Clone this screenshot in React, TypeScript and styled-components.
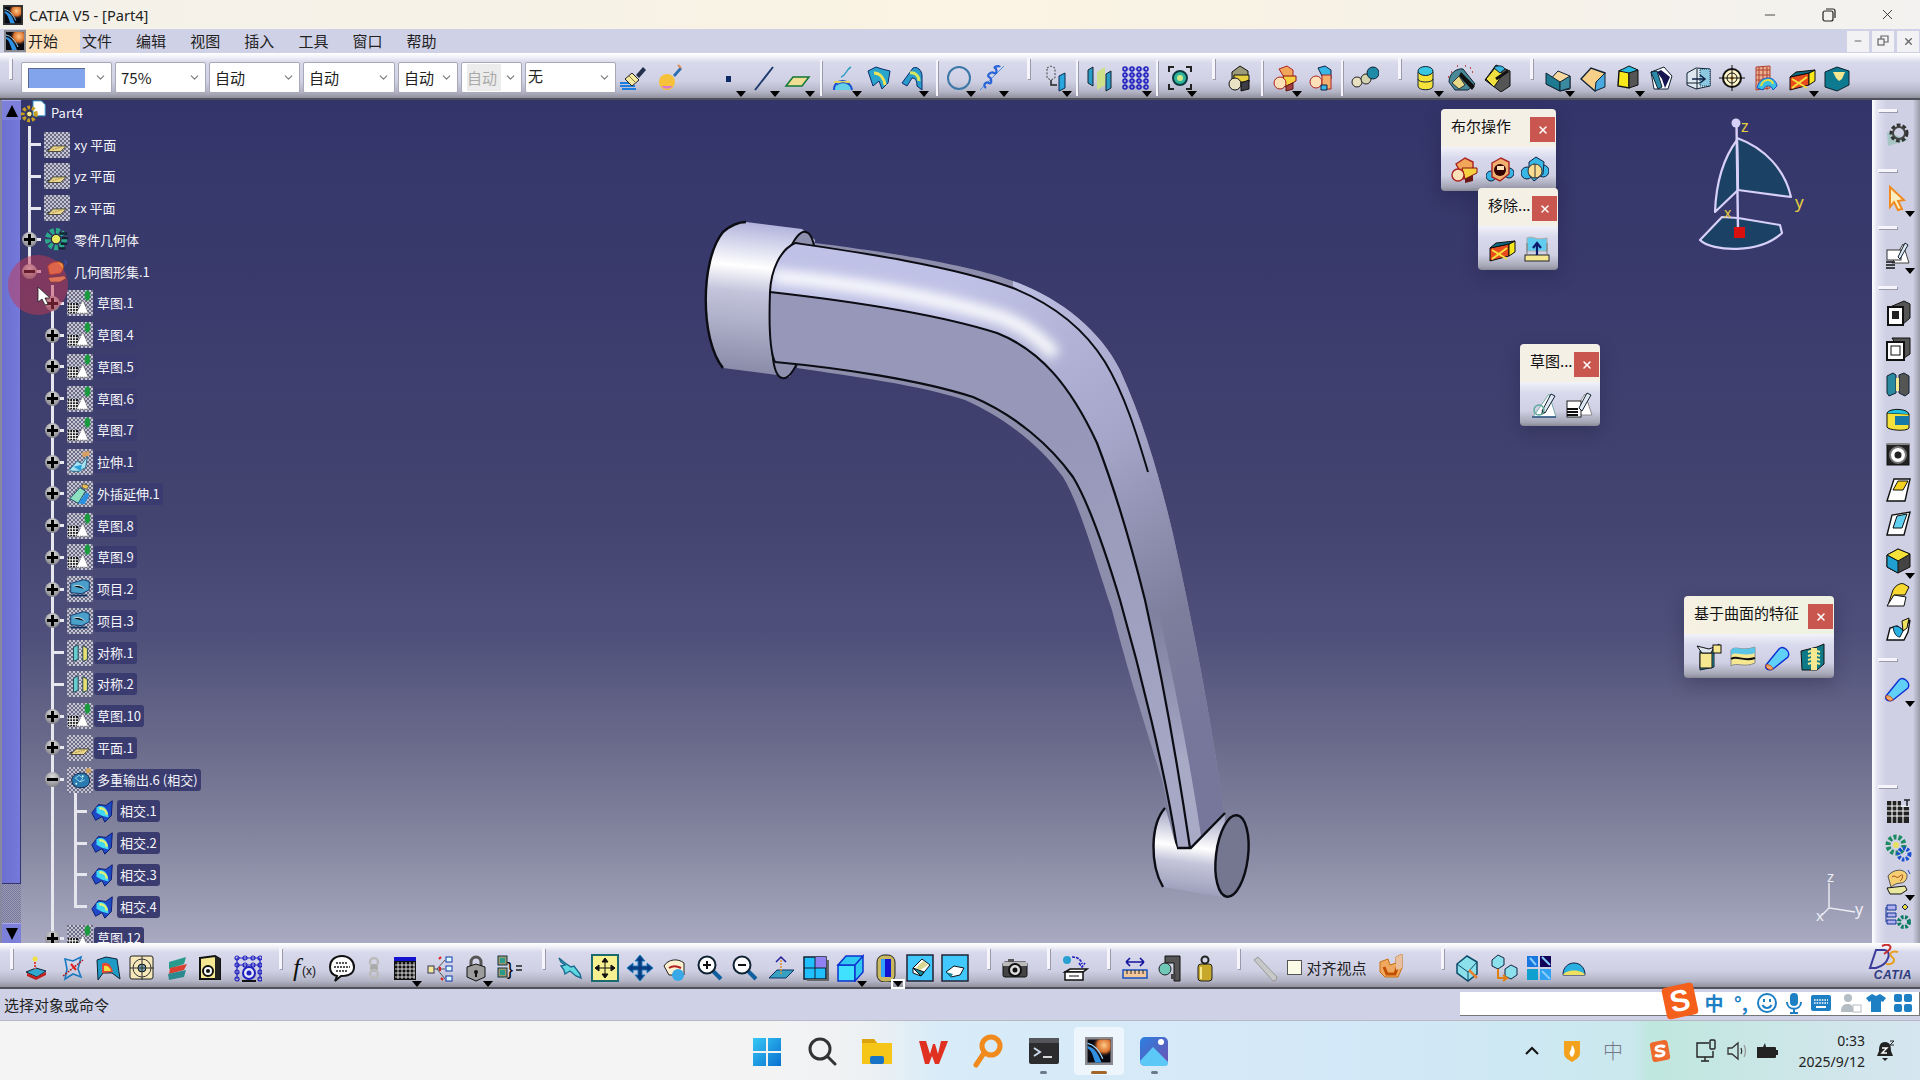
import React from "react";
import styled, { createGlobalStyle } from "styled-components";
import { ChevronDown, Minus, X } from "lucide-react";

const Global = createGlobalStyle`
  html, body { margin: 0; padding: 0; background: #000; }
  * { box-sizing: border-box; }
  body { font-family: "Noto Sans", "Noto Sans CJK SC", sans-serif; }
`;

const ICONS: Record<string, React.ReactNode> = {
  brush: <><path d="M1 19h14M1 22h15M3 25h14" stroke="#1c7fe0" strokeWidth="2"/><path d="M6 15l7-6 7 7-7 6z" fill="#f3e8a2" stroke="#222"/><path d="M10 12l6 6" stroke="#8a7a30"/><path d="M17 11l7-8 3 3-7 8z" fill="#23304d"/></>,
  bulb: <><circle cx="12" cy="18" r="8" fill="#f7c23a"/><path d="M6 22a8 8 0 0 0 12 0z" fill="#d77ad0"/><path d="M18 11l7-8 2 2-7 8z" fill="#2a6db0"/><path d="M23 1l3 3" stroke="#e08850" strokeWidth="2"/></>,
  point: <rect x="11" y="12" width="5" height="6" fill="#0b2a66"/>,
  line: <path d="M6 26L24 3" stroke="#1d3a6e" strokeWidth="2"/>,
  plane: <path d="M2 22l7-9h16l-7 9z" fill="#f0de94" stroke="#173" strokeWidth="1.5"/>,
  wire: <><path d="M10 13c6-2 4-7 10-10" fill="none" stroke="#2a9bc4" strokeWidth="1.4"/><path d="M3 26c0-12 16-12 18 0" fill="#66d0e8" stroke="#1a4fd0" strokeWidth="2"/><path d="M3 18h16" stroke="#e2d060" strokeWidth="2"/><path d="M6 21c4-3 8-3 12 0" stroke="#1a4fd0" fill="none"/></>,
  surf1: <><path d="M3 7l8-4 6 2 8 2-2 12-6 6-3-8-6 5z" fill="#2aa6cc" stroke="#0c2a6e"/><path d="M9 9c6 0 10 5 11 12" stroke="#f0e458" strokeWidth="3" fill="none"/></>,
  surf2: <><path d="M4 19L15 4c4-2 9 2 9 8v14l-5-4c0-6-2-8-5-8l-5 8z" fill="#2a9ccc" stroke="#0c2a6e"/><path d="M12 9c5-1 9 3 9 8" stroke="#d6e860" strokeWidth="3" fill="none"/></>,
  circle: <circle cx="14" cy="14" r="11" fill="none" stroke="#3b78a8" strokeWidth="2"/>,
  helix: <><path d="M2 26L26 2" stroke="#4a90d8"/><path d="M8 24c-4-3 0-7 3-5s3-5 0-6 2-6 5-4 3-4 1-5 4-3 5-1" fill="none" stroke="#2a63d8" strokeWidth="2.2"/></>,
  transform: <><path d="M6 4l4-2 4 2v10l-4 2-4-2z" fill="none" stroke="#444" strokeDasharray="2 1.5"/><path d="M10 16v5h6" stroke="#222" fill="none" strokeWidth="1.5"/><path d="M18 12l6-3v15l-6 3z" fill="#2aa6dc" stroke="#0a2a50"/></>,
  mirror: <><path d="M2 6l5-3v19l-5-3z" fill="#2a9bc4" stroke="#123"/><path d="M11 8l8-5v18l-8 5z" fill="#cfe08a"/><path d="M20 10l5-3v17l-5 3z" fill="#2a9bc4" stroke="#123"/></>,
  dots: <g fill="none" stroke="#2020c0" strokeWidth="1.5">{[4,11,18,25].flatMap(x=>[5,11,17,23].map(y=><circle key={x+"-"+y} cx={x} cy={y} r="2"/>))}<path d="M4 5h21M4 11h21M4 17h21M4 23h21M4 5v18M11 5v18M18 5v18M25 5v18" strokeWidth=".5"/></g>,
  focus: <><circle cx="14" cy="14" r="7" fill="#2fb39b" stroke="#0c3a40" strokeWidth="2"/><circle cx="14" cy="14" r="3" fill="#d4e88a"/><path d="M3 8V3h5M25 8V3h-5M3 20v5h5M25 20v5h-5" stroke="#222" fill="none" strokeWidth="2"/></>,
  asm0: <><path d="M6 8l8-6 8 5v8l-8 5-8-5z" fill="#9c9c7a" stroke="#111"/><path d="M8 11h15v7H8z" fill="#e8d040" stroke="#111"/><circle cx="9" cy="20" r="6" fill="#e9e2c4" stroke="#111"/><path d="M15 19l8-3v9l-8 2z" fill="#3c3c46" stroke="#111"/></>,
  asmR: <><path d="M8 5l8-3 6 4v8l-6 4z" fill="#f2a65a" stroke="#a22"/><path d="M12 12h13v5l-11 6z" fill="#f6d040" stroke="#811"/><circle cx="9" cy="19" r="6" fill="#fbe0b8" stroke="#a22"/><path d="M15 22l7-3v6l-7 2z" fill="#a04040" stroke="#611"/></>,
  asmB: <><path d="M11 4l7-2 6 4v9l-6 3z" fill="#38b6e6" stroke="#124"/><circle cx="9" cy="18" r="6" fill="#fbe0b8" stroke="#a22"/><path d="M15 11h9v14h-9z" fill="#f2b070" stroke="#a22"/><path d="M14 21l6 0v5h-6z" fill="#38b6e6" stroke="#124"/></>,
  spheres: <><circle cx="6" cy="18" r="5" fill="#e8e0c0" stroke="#222"/><circle cx="15" cy="15" r="5" fill="#d4d4b0" stroke="#222"/><circle cx="22" cy="9" r="6" fill="#1e8aa8" stroke="#123"/></>,
  cylY: <><path d="M5 8v14c0 5 15 5 15 0V8z" fill="#f4e23a" stroke="#123"/><path d="M5 15c0 4 15 4 15 0" stroke="#123" fill="none"/><ellipse cx="12.5" cy="7" rx="7.5" ry="4.5" fill="#38c6e0" stroke="#123"/></>,
  sparkle: <><path d="M1 18c0-9 8-14 14-13l12 15-7 6H7z" fill="#4a8a98" stroke="#123"/><path d="M13 8l14 14-3 4L11 12z" fill="#111"/><path d="M4 19l7-7 6 9-6 4z" fill="#e8d888" stroke="#333"/><path d="M3 8h2M9 2h2M17 2h2M0 13h2M24 8h2M22 4h2" stroke="#c0504a" strokeWidth="2" strokeDasharray="1 1"/></>,
  coneK: <><path d="M13 1l14 6v15l-9 6-16-12z" fill="#555" stroke="#111"/><path d="M3 15l9-11 8 6-9 13z" fill="#f2e040" stroke="#111"/><path d="M11 4c2-3 9-3 11 1l-5 4z" fill="#38b6e0" stroke="#123"/><path d="M13 15l12-8" stroke="#111" strokeWidth="3"/></>,
  dome: <><path d="M2 20l12-13 12 5v13l-10 2z" fill="#f6d8a0" stroke="#123"/><path d="M2 20l14 7v-9l-14-9z" fill="#1e7a90" stroke="#123"/><path d="M16 27l10-3V12l-10 6z" fill="#3a8aa0" stroke="#123"/></>,
  wedge: <><path d="M2 15l10-11 14 5-10 18z" fill="#f6d088" stroke="#123" strokeWidth="1.4"/><path d="M16 27l10-4V9l-9 9z" fill="#4aa8e0" stroke="#123"/></>,
  boxY: <><path d="M5 7l10-3v20L4 22z" fill="#f7e81c" stroke="#111" strokeWidth="1.4"/><path d="M15 4l9 2v15l-9 3z" fill="#555" stroke="#111"/><path d="M5 7l10-5 9 4-9 3z" fill="#2abadf" stroke="#111"/></>,
  chamfer: <><path d="M3 8l13-5 8 9-4 13-14 0z" fill="#fff" stroke="#123"/><path d="M3 8l7 17 4-2-5-16z" fill="#2a8ca8" stroke="#123"/><path d="M13 6l9 7-5 11-3-9-5-7z" fill="#141450"/></>,
  split: <><path d="M3 9l9-5 14 1v17l-14 3-9-4z" fill="#dfe8f0" stroke="#123"/><path d="M13 5v20M3 19h20" stroke="#123"/><path d="M16 5h10v17H16z" fill="#8cc8e0" strokeDasharray="1 1" stroke="#135"/><path d="M8 15h12m-4-4l5 4-5 4" stroke="#124" fill="none" strokeWidth="1.5"/></>,
  target: <><circle cx="14" cy="14" r="9" fill="#fff4c8" stroke="#111" strokeWidth="2"/><circle cx="14" cy="14" r="5" fill="none" stroke="#111"/><circle cx="14" cy="14" r="1.8" fill="#e8a020"/><path d="M14 1v26M1 14h26" stroke="#111"/></>,
  rainbow: <><path d="M3 3l14-1v22L3 26z" fill="#e8b090" stroke="#b04030"/><path d="M3 6h14M3 11h14M3 16h14M6 3v23M10 3v23M14 3v23" stroke="#b04030"/><path d="M4 24c2-12 18-14 20-2l-4 4c-2-6-8-5-10 0z" fill="#3ac0e0" stroke="#15c"/><path d="M8 22c2-7 10-8 12-2" stroke="#e8e040" strokeWidth="2" fill="none"/></>,
  boxX: <><path d="M2 13l19-4v12L2 26z" fill="#e84a1c" stroke="#111"/><path d="M4 15l15 9M19 13L4 24" stroke="#f6e040" strokeWidth="2"/><path d="M21 9l6-3v11l-6 4z" fill="#f6e81c" stroke="#111"/><path d="M2 13l6-5 19-2-6 3z" fill="#0e6a80" stroke="#111"/></>,
  boxShield: <><path d="M2 8l12-5 12 4v14l-12 6-12-4z" fill="#0e7a90" stroke="#123"/><path d="M10 8h12l-3 7-3 2-3-3z" fill="#f6e890"/></>,
  extrudeB: <><path d="M3 18l10-4 10 3-9 6z" fill="#30a8d0" stroke="#123"/><path d="M13 23v3l-9-4v-3zM13 26l10-5v-3l-10 5z" fill="#c02020"/><path d="M12 5v10" stroke="#d44" strokeWidth="2" strokeDasharray="2 1"/><circle cx="12" cy="5" r="2.5" fill="#f0e040"/></>,
  surfRed: <><path d="M6 5l8 2 8-4-3 12 3 8-8-3-8 5 2-10z" fill="none" stroke="#1a7ac0" strokeWidth="1.6"/><path d="M4 22L24 6" stroke="#b02020" strokeDasharray="2 1" strokeWidth="1.5"/><path d="M12 10l5 6" stroke="#e02020" strokeWidth="2"/></>,
  surfMesh: <><path d="M4 6l9-3 11 2 3 20-8-6-9 0-5 7z" fill="#1e9ac4" stroke="#123"/><path d="M9 10c4-3 9 0 11 8l-11 1z" fill="#e84830"/><path d="M11 12c3-1 6 1 7 5l-7 0z" fill="#f0e040"/></>,
  radar: <><rect x="2" y="2" width="23" height="23" rx="2" fill="#f6e8b8" stroke="#222"/><circle cx="14" cy="14" r="9" fill="none" stroke="#333"/><circle cx="14" cy="14" r="4" fill="#70a0b0" stroke="#111"/><path d="M14 2v24M2 14h24" stroke="#333"/></>,
  layers: <><path d="M5 8l17-5-2 7-15 5z" fill="#2a9a8c"/><path d="M6 14l17-4-3 6-15 4z" fill="#d84030"/><path d="M4 20l18-4-2 7-15 3z" fill="#2a8a90"/></>,
  formula: <><path d="M2 4l15-2 5 3v20H2z" fill="#f6e890" stroke="#111" strokeWidth="2"/><path d="M17 2v23h5V5z" fill="#222"/><circle cx="10" cy="17" r="5" fill="#fff" stroke="#111" strokeWidth="2"/><circle cx="10" cy="17" r="2" fill="#111"/></>,
  dotsGear: <><g fill="none" stroke="#2020c0" strokeWidth="1.2">{[3,11,19,26].flatMap(x=>[4,11].map(y=><circle key={x+"_"+y} cx={x} cy={y} r="2"/>))}<circle cx="3" cy="18" r="2"/><circle cx="3" cy="25" r="2"/><circle cx="26" cy="18" r="2"/><circle cx="26" cy="25" r="2"/><path d="M3 4h23M3 11h23M3 4v21M26 4v21"/></g><circle cx="15" cy="19" r="6" fill="#e6e6f8" stroke="#2020c0" strokeWidth="2"/><circle cx="15" cy="19" r="2.5" fill="#2020c0"/><path d="M8 27h14" stroke="#111" strokeWidth="2"/></>,
  bubble: <><path d="M14 2C6 2 2 7 2 13c0 5 3 8 7 9l-2 5 6-5c8 0 13-3 13-9S21 2 14 2z" fill="#fff" stroke="#111" strokeWidth="2"/><path d="M8 9h12M6 13h16M8 17h12" stroke="#555" strokeWidth="2" strokeDasharray="2 1"/></>,
  chain: <><circle cx="14" cy="8" r="4" fill="none" stroke="#bbb" strokeWidth="2.5"/><circle cx="14" cy="14" r="4" fill="#aaa"/><circle cx="14" cy="20" r="4" fill="none" stroke="#bbb" strokeWidth="2.5"/></>,
  table: <><rect x="3" y="3" width="22" height="23" fill="#111"/><rect x="3" y="3" width="22" height="4" fill="#1414d0"/><path d="M4 11h20M4 15h20M4 19h20M4 23h20M7 8v17M11 8v17M15 8v17M19 8v17M23 8v17" stroke="#fff" strokeWidth=".8"/></>,
  tree2: <><rect x="1" y="12" width="6" height="7" fill="#f4e89a" stroke="#335"/><g fill="#dff" stroke="#13a"><rect x="19" y="3" width="6" height="5"/><rect x="19" y="12" width="6" height="5"/><rect x="19" y="22" width="6" height="5"/></g><path d="M7 15h11M10 15L18 6M10 15l8 10" stroke="#555"/><path d="M12 5l2-2M13 13v4M14 24l2 2" stroke="#d22" strokeWidth="2"/></>,
  lock: <><path d="M9 12V8a5 5 0 0 1 10 0v4" fill="none" stroke="#555" strokeWidth="3"/><path d="M5 13l9-3 9 3v10l-9 4-9-4z" fill="#9c9c9c" stroke="#111"/><circle cx="14" cy="18" r="2" fill="#111"/><path d="M14 18v5" stroke="#111" strokeWidth="2"/></>,
  params: <><rect x="1" y="2" width="9" height="9" fill="#9c9c70" stroke="#134"/><rect x="3" y="4" width="5" height="5" fill="#2a9a8c"/><rect x="1" y="14" width="9" height="9" fill="#9c9c70" stroke="#134"/><rect x="3" y="16" width="5" height="5" fill="#2a9a8c"/><text x="10" y="21" fontSize="18" fontFamily="Liberation Sans">{"}"}</text><path d="M19 12h6M19 16h6" stroke="#222" strokeWidth="1.5"/></>,
  plane3: <path d="M3 4l6 5 6 4 3-1 6 8 1 4-5-2-6-5-5 3-1-4-3-4 4-1-4-3z" fill="#60d8e0" stroke="#1a6a90" strokeWidth="1.4"/>,
  fit: <><rect x="1" y="1" width="26" height="26" fill="#f6f090" stroke="#1a6a70" strokeWidth="2"/><path d="M14 4v20M4 14h20M14 4l-3 4h6zM14 24l-3-4h6zM4 14l4-3v6zM24 14l-4-3v6z" stroke="#111" fill="#111"/></>,
  pan: <path d="M14 1l5 6h-3v5h5V9l6 5-6 5v-3h-5v5h3l-5 6-5-6h3v-5H7v3l-6-5 6-5v3h5V7H9z" fill="#0a3a80" stroke="#1a80c0"/>,
  rotate: <><path d="M3 12c4-7 14-8 20-3v12H8z" fill="#fdf0d0" stroke="#222"/><path d="M8 14c3-2 8-2 12 0" stroke="#b02020" strokeWidth="2" fill="none"/><circle cx="17" cy="21" r="6" fill="#38a8e8"/></>,
  zoomIn: <><path d="M17 17l8 8" stroke="#1060a0" strokeWidth="4"/><circle cx="11" cy="11" r="8.5" fill="#fff" stroke="#123" strokeWidth="2"/><path d="M11 7v8M7 11h8" stroke="#111" strokeWidth="2"/></>,
  zoomOut: <><path d="M17 17l8 8" stroke="#1060a0" strokeWidth="4"/><circle cx="11" cy="11" r="8.5" fill="#fff" stroke="#123" strokeWidth="2"/><path d="M7 11h8" stroke="#111" strokeWidth="2"/></>,
  normal: <><path d="M2 24l8-8h17l-8 8z" fill="#38a0c0" stroke="#136"/><path d="M14 20V4" stroke="#e09030" strokeWidth="1.5" strokeDasharray="2 1"/><path d="M9 8l5-5 5 5" fill="none" stroke="#2020a0" strokeWidth="1.5"/></>,
  views: <><rect x="3" y="3" width="22" height="22" fill="#20c0ff" stroke="#123" strokeWidth="1.5"/><rect x="14" y="3" width="11" height="11" fill="#9080f0"/><path d="M14 3v22M3 14h22" stroke="#123"/><path d="M6 26h21V6" stroke="#666" fill="none" strokeWidth="2"/></>,
  cube: <><path d="M2 11h17v16H2z" fill="#40e0ff" stroke="#1030d0" strokeWidth="1.5"/><path d="M2 11l8-9h17l-8 9zM19 11l8-9v16l-8 9z" fill="#30c8f0" stroke="#1030d0" strokeWidth="1.5"/></>,
  canY: <><rect x="5" y="1" width="18" height="27" rx="7" fill="#c8b860" stroke="#222"/><rect x="9" y="5" width="10" height="18" fill="#1414d0"/><path d="M9 5h4v18H9z" fill="#30a0ff"/></>,
  shade1: <><rect x="1" y="1" width="26" height="26" fill="#40c8ff" stroke="#223" strokeWidth="1.5"/><path d="M7 14l9-9 8 6-9 11-8-3z" fill="#fff" stroke="#111"/><path d="M10 14l7-7 5 4-8 5z" fill="#d8d890"/><path d="M7 14l8 8 3-4z" fill="#168898" stroke="#111"/></>,
  shade2: <><rect x="1" y="1" width="26" height="26" fill="#40c8ff" stroke="#223" strokeWidth="1.5"/><path d="M5 18l8-6 10 2-4 7-9 2z" fill="#fff" stroke="#111"/><path d="M5 18l5 5 2-3z" fill="#168898"/></>,
  camera: <><rect x="2" y="8" width="24" height="15" rx="2" fill="#444" stroke="#111"/><rect x="2" y="8" width="24" height="4" fill="#bbb"/><rect x="7" y="5" width="6" height="3" fill="#555"/><circle cx="14" cy="16" r="6" fill="#ddd" stroke="#111" strokeWidth="2"/><circle cx="14" cy="16" r="2.5" fill="#111"/></>,
  print: <><circle cx="6" cy="6" r="4" fill="#2aa0d0"/><path d="M11 3c5 0 9 2 10 7m-3-1l3 4 3-4" stroke="#2020c0" strokeWidth="1.6" fill="none" strokeDasharray="3 1"/><path d="M4 18h18l4-3H9z" fill="#fff" stroke="#111" strokeWidth="1.5"/><rect x="4" y="18" width="18" height="8" fill="#fff" stroke="#111" strokeWidth="1.5"/><path d="M8 22h10" stroke="#111"/></>,
  measure: <><path d="M5 8h18M5 8l4-4M5 8l4 4M23 8l-4-4M23 8l-4 4" stroke="#1414a0" strokeWidth="1.7" fill="none"/><rect x="2" y="16" width="24" height="8" fill="#f2c89a" stroke="#1a50c0" strokeWidth="1.5"/><path d="M6 16v4M10 16v4M14 16v4M18 16v4M22 16v4" stroke="#222"/></>,
  caliper: <><path d="M9 2h15v25h-6V9H9z" fill="#555" stroke="#111"/><circle cx="9" cy="15" r="6" fill="#70c8b8" stroke="#222"/><path d="M15 20h5v5h-5z" fill="#444"/></>,
  weight: <><rect x="7" y="10" width="14" height="17" rx="3" fill="#c8a82a" stroke="#222"/><path d="M10 13v12" stroke="#f6e890" strokeWidth="2"/><circle cx="14" cy="6" r="3.5" fill="none" stroke="#222" strokeWidth="2"/></>,
  pencil: <path d="M3 6l4-3 19 20-1 3-3 1z" fill="#c8c8c8" stroke="#999"/>,
  ushape: <><path d="M4 8l8-3 2 6 6-2 0-6 6-3v14l-4 9H9l-5-5z" fill="#f0a860" stroke="#c87010"/><path d="M8 13l3 7h8l3-9" stroke="#c05000" strokeWidth="3" fill="none"/><path d="M20 3l6-3v14l-6 2z" fill="#e8c0a0"/></>,
  cubeArrow: <><path d="M2 10l10-8 10 6v12l-9 7-11-8z" fill="#8ce0ec" stroke="#0c4a68" strokeWidth="1.5"/><path d="M2 10l11 8 9-10M13 18v9" stroke="#0c4a68" fill="none"/><path d="M14 16l8 8" stroke="#e88030" strokeWidth="2.5"/></>,
  blocks: <><path d="M2 6l6-5 6 3v7l-6 4-6-3z" fill="#8ce0ec" stroke="#124"/><path d="M15 15l6-4 6 3v7l-6 4-6-3z" fill="#8ce0ec" stroke="#124"/><path d="M8 15v9h8m-3-3l4 3-4 3" stroke="#e08010" strokeWidth="2" fill="none"/></>,
  quad: <><rect x="2" y="2" width="11" height="11" fill="#1878e0"/><rect x="15" y="2" width="11" height="11" fill="#105"/><rect x="2" y="15" width="11" height="11" fill="#10a0d0"/><rect x="15" y="15" width="11" height="11" fill="#30a0f0"/><path d="M5 4l6 7M17 3l8 8M17 17l8 8" stroke="#8cf" strokeWidth="2"/></>,
  arc: <><path d="M3 21c0-16 22-16 22 0z" fill="#2ab0e0" stroke="#124"/><path d="M3 21c3-6 19-6 22 0z" fill="#f0e060"/></>,
  bool1: <><path d="M5 8l9-6 8 4v10l-9 7z" fill="#f2a65a" stroke="#a22" strokeWidth="1.4"/><path d="M11 12h15v5l-12 6z" fill="#f6d040" stroke="#811"/><circle cx="7" cy="19" r="6" fill="#fbe0b8" stroke="#a22" strokeWidth="1.4"/><path d="M14 23l8-4v6l-8 2z" fill="#6a1818"/></>,
  bool2: <><circle cx="5" cy="20" r="5" fill="#38b6e6" stroke="#124"/><circle cx="23" cy="17" r="5" fill="#38b6e6" stroke="#124"/><path d="M6 7l9-5 8 4v12l-9 7-8-4z" fill="#f2b070" stroke="#a22" strokeWidth="1.4"/><circle cx="14" cy="14" r="6" fill="#300"/><path d="M11 10h7v4h-7z" fill="#fbe0b8"/></>,
  bool3: <><circle cx="6" cy="17" r="6" fill="#38b6e6" stroke="#124"/><circle cx="22" cy="15" r="6" fill="#38b6e6" stroke="#124"/><path d="M8 6l7-5 8 5-1 12-9 7-5-6z" fill="#38b6e6" stroke="#124"/><circle cx="14" cy="15" r="7" fill="#fbdc90" stroke="#333"/><path d="M14 8v14" stroke="#333"/></>,
  removeSurf: <><path d="M4 3c6-3 8 3 20 0v13l-20 0z" fill="#60ccf0" stroke="#aaa"/><rect x="2" y="20" width="24" height="6" fill="#f6e890" stroke="#222"/><path d="M14 20V9m-4 4l4-5 4 5" stroke="#0c1a6e" strokeWidth="2.2" fill="none"/><path d="M4 8v13M24 8v13" stroke="#777"/></>,
  sketchA: <><path d="M3 26h23L19 3z" fill="#fff" stroke="#7aa"/><path d="M12 20l9-17 4 2-10 17z" fill="#dfe8f0" stroke="#123"/><path d="M12 20l3 2-4 2z" fill="#111"/><circle cx="9" cy="19" r="5" fill="none" stroke="#5aa89a" strokeWidth="1.4"/><path d="M2 26h24" stroke="#2a5080" strokeWidth="1.6"/></>,
  sketchB: <><path d="M6 24h21L20 3z" fill="#fff" stroke="#888"/><rect x="2" y="10" width="14" height="16" fill="#fff" stroke="#222"/><path d="M2 18h11M2 21h11M2 24h11" stroke="#111" strokeWidth="1.8"/><path d="M14 17l8-15 4 2-9 16z" fill="#dfe8f0" stroke="#123"/></>,
  padSurf: <><path d="M6 8l12-2 7-5v6l-5 3v14l-14 3z" fill="#2a9aa8" stroke="#123"/><path d="M6 10h12v15H6z" fill="#f6e890" stroke="#111"/><path d="M3 3l12 3 5-2-3 6H8z" fill="#dfe8f0" stroke="#111"/><rect x="19" y="2" width="8" height="8" fill="#f6e890" stroke="#111"/></>,
  thick: <><path d="M2 7c5-5 10 2 24-3v16c-10 5-19-1-24 3z" fill="#f6e890" stroke="#888"/><path d="M2 16c6-4 12 3 24-1" stroke="#111" strokeWidth="2" fill="none"/><path d="M2 7c5-5 10 2 24-3v6C15 14 8 8 2 12z" fill="#5cc6e8"/></>,
  capsule: <><path d="M2 22L15 6c4-4 12 2 9 8L9 26c-3 2-9 0-7-4z" fill="#60d0f8" stroke="#1030d0" strokeWidth="1.4"/><path d="M2 22c-1 3 4 6 7 4-1-3-4-5-7-4z" fill="#f4a868" stroke="#c05020"/></>,
  sew: <><path d="M2 8l16-4 7-3v20l-7 6H3z" fill="#0e7a88" stroke="#111"/><path d="M12 5h6v22h-6z" fill="#f6e890"/><path d="M12 8l-3 1M12 12l-3 1M12 16l-3 1M12 20l-3 1M18 8l3 1M18 12l3 1M18 16l3 1M18 20l3 1" stroke="#f6e890" strokeWidth="2"/></>,
  gear: <><path d="M3 13l22 8-21 6z" fill="#8cc0b0" opacity=".6"/><circle cx="15" cy="14" r="7.5" fill="none" stroke="#333" strokeWidth="4" strokeDasharray="3.5 2"/><circle cx="15" cy="14" r="6" fill="none" stroke="#444" strokeWidth="2"/></>,
  cursor: <path d="M6 3l14 13-6 1 4 8-4 1-4-8-4 5z" fill="#fdf0c0" stroke="#f08a20" strokeWidth="2"/>,
  sketchC: <><path d="M8 22h17L19 3z" fill="#fff" stroke="#444"/><rect x="3" y="9" width="14" height="10" fill="#fff" stroke="#333"/><path d="M2 21h9M2 24h9M2 27h9" stroke="#111" strokeWidth="1.5"/><path d="M14 16l7-14 3 2-8 14z" fill="#dfe8f0" stroke="#123"/></>,
  pad1: <><path d="M6 8l14-6 6 3v14l-8 7H6z" fill="#555" stroke="#111"/><path d="M4 8h15v18H4z" fill="#fff" stroke="#111" strokeWidth="2"/><path d="M8 12h7v8H8z" fill="#222"/></>,
  pad2: <><path d="M8 3h18v16l-6 4z" fill="#555" stroke="#111"/><rect x="3" y="7" width="17" height="18" fill="#fff" stroke="#111" strokeWidth="2"/><rect x="7" y="11" width="9" height="9" fill="#fff" stroke="#111"/></>,
  shaft: <><path d="M3 6l6-3 3 2v18l-7 3-2-3z" fill="#2a8aa0" stroke="#123"/><path d="M15 5l5-2 5 3v17l-4 3-6-3z" fill="#555" stroke="#123"/><path d="M12 8h3v13h-3z" fill="#f6e890"/></>,
  cylH: <><path d="M3 8v14c0 3 20 5 22 1V9z" fill="#f4e23a" stroke="#111"/><path d="M3 8c2-5 20-5 22 1" fill="#20c0e0" stroke="#111"/><rect x="11" y="11" width="14" height="9" fill="#1878a8"/></>,
  holeB: <><rect x="3" y="4" width="22" height="21" fill="#222" stroke="#111"/><path d="M3 4h22" stroke="#888" strokeWidth="2"/><circle cx="14" cy="15" r="8" fill="#fff" stroke="#777" strokeWidth="2"/><circle cx="14" cy="15" r="3.5" fill="#222"/></>,
  rib: <><path d="M3 26l7-22h16l-5 22z" fill="#fff" stroke="#111" strokeWidth="1.4"/><path d="M9 15l5-9h10l-5 9z" fill="#f4d020" stroke="#111"/></>,
  slot: <><path d="M3 25l5-20 18-3-6 23z" fill="#fff" stroke="#111" strokeWidth="1.4"/><path d="M9 18l4-12 10-2-5 14z" fill="#60d0f0" stroke="#111"/></>,
  stiff: <><path d="M3 9l11-6 12 5v13l-12 6-11-6z" fill="#444" stroke="#111"/><path d="M3 9l11 6 12-7-12-5z" fill="#f4e23a" stroke="#111"/><path d="M14 15v12l-11-6V9z" fill="#20a0d0" stroke="#111"/></>,
  loft: <><path d="M4 25l4-12c1-6 8-11 12-9l5 3-4 8H10z" fill="#f6d830" stroke="#111"/><path d="M3 26h17l2-9-12-2z" fill="#fff" stroke="#111"/></>,
  rloft: <><path d="M3 25l3-12 7-2 6 4 7-10-2 12-4 8z" fill="#fff" stroke="#111" strokeWidth="1.4"/><path d="M9 12c3-2 8 0 10 4l-3 6c-4 0-6-4-7-10z" fill="#28b0e0" stroke="#123"/><path d="M18 6l7-3-2 10-4 3z" fill="#f0e060" stroke="#111"/></>,
  gridT: <><path d="M3 3h14v6h8v16H3z" fill="#222"/><path d="M3 8h22M3 13h22M3 18h22M8 3v22M13 3v22M19 9v16" stroke="#fff" strokeWidth="1.1"/><path d="M20 2h6M23 2v6" stroke="#222" strokeWidth="1.5"/></>,
  gears: <><circle cx="12" cy="11" r="8" fill="none" stroke="#1e8a60" strokeWidth="5" strokeDasharray="3 2"/><circle cx="12" cy="11" r="3" fill="#e8e060"/><circle cx="20" cy="20" r="5.5" fill="none" stroke="#1a50d0" strokeWidth="4" strokeDasharray="2.5 1.5"/></>,
  geoT: <><path d="M4 8c4-6 14-8 18-3 3 4-1 10-5 10-4 0-8 2-10 4z" fill="#f6d070" stroke="#555"/><path d="M8 9c4-3 4 3 8-1s3 3 0 5" stroke="#a04020" fill="none"/><path d="M3 20l18-2 2 4-6 4H6z" fill="#e8e8a0" stroke="#111"/><path d="M24 2l2 4" stroke="#2040d0"/></>,
  treeGear: <><path d="M3 3h9v5H3zM3 11h9v4H3zM3 18h9v4H3z" fill="#b0b0f0" stroke="#103090"/><path d="M2 5v15" stroke="#103090"/><circle cx="20" cy="20" r="5" fill="none" stroke="#0a7a60" strokeWidth="4" strokeDasharray="2.5 1.5"/><path d="M18 5l3-3 3 3-3 3z" fill="#e8d840" stroke="#124"/></>,
  root: <><path d="M13 1h9l4 4v12H13z" fill="#fff" stroke="#3aa0d0"/><circle cx="9" cy="15" r="7" fill="none" stroke="#c8a020" strokeWidth="4" strokeDasharray="3 2"/><circle cx="9" cy="15" r="3" fill="#f6e890" stroke="#333"/></>,
  body: <><circle cx="13" cy="13" r="9" fill="none" stroke="#2aaa8a" strokeWidth="6" strokeDasharray="4 2"/><circle cx="13" cy="13" r="5" fill="#e8e860" stroke="#123"/><path d="M17 7h8M19 12h7M18 18h7M16 23h7" stroke="#123" strokeWidth="2.5"/></>,
  geoset: <><path d="M4 8c3-5 12-7 16-3 3 4-1 11-5 11s-6 1-9 1z" fill="#f49040" stroke="#a04010"/><path d="M4 20l18-2 2 3-7 4H7z" fill="#f6b060" stroke="#333"/><path d="M22 2c3 0 2 3 0 5" stroke="#4060e0" fill="none"/></>,
  planeT: <><path d="M3 19h6" stroke="#222"/><path d="M4 21l6-6h14l-6 6z" fill="#e8d48a" stroke="#443"/><path d="M9 19l10-3" stroke="#a89040" strokeDasharray="2 1"/></>,
  sketchT: <><rect x="1" y="14" width="11" height="11" fill="#111"/><path d="M3 14v11M6 14v11M9 14v11M1 17h11M1 20h11M1 23h11" stroke="#fff"/><path d="M10 25h13l-6-14z" fill="#fff" stroke="#555" strokeDasharray="1 1"/><ellipse cx="22" cy="6" rx="3" ry="5.5" fill="#1b9a40"/></>,
  extrudeT: <><path d="M3 22l8-9 5 3 6-8-2 12-7 4-8 0z" fill="#a8e0f0" stroke="#268"/><path d="M7 19l8 5 1-7z" fill="#2aa0d8"/><path d="M16 4l8-2v5l-7 2z" fill="#d8a060"/></>,
  extrapT: <><path d="M3 19l11-12 6 4-8 13z" fill="#8ce0c0" stroke="#146"/><path d="M12 24l9-12 3 3-5 10z" fill="#2a90e0"/><path d="M17 3l7 2-3 4-5-2z" fill="#e8c050" stroke="#555"/></>,
  projT: <><path d="M4 8l14-4 6 2v9l-8 4-12-1z" fill="#4aa0c8" stroke="#136"/><path d="M4 21h18" stroke="#103060" strokeWidth="2"/><path d="M7 11c5-2 9 0 12 3" stroke="#eee"/></>,
  symT: <><path d="M14 2v24" stroke="#fff" strokeDasharray="2 1"/><path d="M7 8l5-3v16l-5 2z" fill="#6cc" stroke="#245"/><path d="M17 6l5 3v12l-5 2z" fill="#e8e070" stroke="#245"/></>,
  multiT: <><path d="M5 13c2-7 15-9 18-3 3 5 1 11-5 12-6 1-13 0-13-9z" fill="#2a7ab0" stroke="#124"/><path d="M9 12l4-3 4 3-3 4zM14 16l5-2" stroke="#9de" fill="none"/><circle cx="10" cy="18" r="1" fill="#dfe"/><circle cx="17" cy="10" r="1" fill="#dfe"/><circle cx="23" cy="4" r="3" fill="#c8a060"/></>,
  interT: <><path d="M2 16l7-9 8 1 7-5-1 16-7 7-3-6-7 4z" fill="#1e4ac8" stroke="#0a1a6e"/><path d="M7 10c7-4 12 1 13 11l-7-2-6-3z" fill="#40d8f0"/><path d="M10 11c5 0 8 3 8 7" stroke="#e0f070" strokeWidth="2.5" fill="none"/></>,
  fx: <><text x="0" y="22" fontSize="26" fontStyle="italic" fontFamily="Liberation Serif" fill="#111">f</text><text x="9" y="21" fontSize="12" fontFamily="Liberation Sans" fill="#111">(x)</text></>,
};

const Root = styled.div`
  width: 1920px;
  height: 1080px;
  display: flex;
  flex-direction: column;
  overflow: hidden;
  font-family: "Noto Sans", "Noto Sans CJK SC", sans-serif;
`;

const TitleBar = styled.div`
  height: 29px;
  flex: none;
  display: flex;
  align-items: center;
  padding-left: 3px;
  background: linear-gradient(90deg, #f4f1ea 0, #f6f2e6 30%, #fbf3e3 50%, #f7f2e6 70%, #f3f2f0 100%);
  font-size: 14.6px;
  color: #222;
`;

const TitleText = styled.span`
  margin-left: 6px;
`;

const WinButtons = styled.div`
  margin-left: auto;
  display: flex;
  padding-right: 3px;
  color: #222;
`;

const WinButton = styled.div`
  width: 59px;
  height: 29px;
  display: flex;
  align-items: center;
  justify-content: center;
`;

const MenuBar = styled.div`
  height: 24px;
  flex: none;
  display: flex;
  align-items: center;
  background: #cfd1e6;
  font-family: "Noto Sans CJK SC", sans-serif;
  font-size: 15px;
  color: #222;
  padding-left: 4px;
`;

const StartItem = styled.div`
  width: 54px;
  height: 24px;
  margin-right: 2px;
  padding-left: 2px;
  line-height: 24px;
  background: #fde3c0;
`;

const MenuItem = styled.div`
  width: 54.1px;
  line-height: 24px;
`;

const DocButtons = styled.div`
  margin-left: auto;
  display: flex;
  gap: 3px;
  padding-right: 1px;
`;

const DocButton = styled.div`
  width: 22px;
  height: 21px;
  background: #f2f2f5;
  color: #666;
  display: flex;
  align-items: center;
  justify-content: center;
`;

const Bar = styled.div<{ $h: number }>`
  height: ${(p) => p.$h}px;
  flex: none;
  display: flex;
  align-items: flex-start;
  padding-top: 11px;
  background: linear-gradient(180deg, #fff 0, #f4f4fa 7%, #d8d9eb 20%, #cfd0e4 60%, #b4b5c6 82%, #8f8f9c 96%, #50505a 96%, #50505a 100%);
`;

const ComboRow = styled.div`
  display: flex;
  gap: 3px;
  margin-left: 9px;
  margin-top: -2px;
`;

const ComboBox = styled.div<{ $w: number; $off?: boolean }>`
  width: ${(p) => p.$w}px;
  height: 31px;
  background: #fff;
  border: 1px solid #a8a8b8;
  border-radius: 2px;
  display: flex;
  align-items: center;
  padding: 0 4px 0 5px;
  font-family: "Noto Sans CJK SC", sans-serif;
  font-size: 15px;
  color: ${(p) => (p.$off ? "#aaa" : "#222")};
  svg { margin-left: auto; color: #777; flex: none; }
`;

const Swatch = styled.div`
  width: 57px;
  height: 20px;
  margin-left: 1px;
  background: #82a4ec;
  border-top: 1px solid #5a6a90;
  border-left: 1px solid #5a6a90;
`;

const OffText = styled.span`
  background: #ececec;
  height: 27px;
  line-height: 27px;
  padding-right: 4px;
`;

const NoneText = styled.span`
  margin: -5px 0 0 -3px;
`;

const ToolSlot = styled.div<{ $gap: number; $col?: boolean }>`
  width: 28px;
  height: 28px;
  flex: none;
  position: relative;
  ${(p) => (p.$col ? `margin-top: ${p.$gap}px;` : `margin-left: ${p.$gap}px;`)}
  svg { display: block; }
`;

const DropArrow = styled.i<{ $boxed?: boolean }>`
  position: absolute;
  left: 21px;
  top: 27px;
  width: 0;
  height: 0;
  border-left: 5px solid transparent;
  border-right: 5px solid transparent;
  border-top: 6px solid #000;
  ${(p) => (p.$boxed ? "outline: 2px solid #fff;" : "")}
`;

const Grip = styled.div<{ $gap: number; $col?: boolean; $tall?: boolean }>`
  flex: none;
  background: #f5f5fb;
  box-shadow: 1px 1px 0 #9a9aaa;
  ${(p) =>
    p.$col
      ? `width: 19px; height: 3px; margin-top: ${p.$gap}px; margin-left: -6px;`
      : `width: ${p.$tall ? 2 : 3}px; height: ${p.$tall ? 36 : 21}px; margin-left: ${p.$gap}px; margin-top: ${p.$tall ? -4 : -6}px;`}
`;

const Viewport = styled.div`
  flex: 1;
  display: flex;
  min-height: 0;
`;

const Canvas = styled.div`
  flex: 1;
  position: relative;
  display: flex;
  overflow: hidden;
  background: linear-gradient(180deg, #33346a 0, #43446f 50%, #4e4f7a 63%, #676889 75%, #85869f 88%, #a9aac2 100%);
`;

const ScrollBar = styled.div`
  width: 21px;
  flex: none;
  display: flex;
  flex-direction: column;
  border-left: 2px solid #8888a0;
`;

const ScrollBtn = styled.div<{ $down?: boolean }>`
  height: 20px;
  flex: none;
  background: #7c80d8;
  display: flex;
  align-items: center;
  justify-content: center;
  border-top: 1px solid #a8a8ee;
  &::after {
    content: "";
    border-left: 6px solid transparent;
    border-right: 6px solid transparent;
    ${(p) => (p.$down ? "border-top: 12px solid #000;" : "border-bottom: 12px solid #000;")}
  }
`;

const ScrollThumb = styled.div`
  height: 764px;
  flex: none;
  background: linear-gradient(90deg, #6a6fd0, #7479da);
  border-right: 1px solid #34346e;
  border-bottom: 1px solid #34346e;
`;

const ScrollTrack = styled.div`
  flex: 1;
  background: repeating-conic-gradient(#9a9ab0 0 25%, #7878a0 0 50%) 0 0 / 2px 2px;
`;

const Tree = styled.div`
  margin: -3px 0 0 -3px;
  display: flex;
  flex-direction: column;
  color: #f4f4fa;
  font-family: "Noto Sans CJK SC", "Noto Sans", sans-serif;
  font-size: 13px;
`;

const Row = styled.div`
  height: 31.75px;
  flex: none;
  display: flex;
  align-items: center;
`;

const Guide = styled.span<{ $v: "none" | "full" | "up"; $h?: boolean }>`
  width: 23px;
  height: 100%;
  flex: none;
  position: relative;
  &::before {
    content: "";
    display: ${(p) => (p.$v === "none" ? "none" : "block")};
    position: absolute;
    left: 10px;
    top: 0;
    width: 3px;
    height: ${(p) => (p.$v === "up" ? "50%" : "100%")};
    background: #e6e6ee;
  }
  &::after {
    content: "";
    display: ${(p) => (p.$h ? "block" : "none")};
    position: absolute;
    left: 10px;
    right: 0;
    top: calc(50% - 1.5px);
    height: 3px;
    background: #e6e6ee;
  }
`;

const Expander = styled.b`
  position: absolute;
  z-index: 1;
  left: 4px;
  top: calc(50% - 7.5px);
  width: 15px;
  height: 15px;
  border-radius: 50%;
  background: radial-gradient(circle at 50% 30%, #dcdcdc, #707078);
  display: flex;
  align-items: center;
  justify-content: center;
  svg { display: block; }
`;

const TreeIcon = styled.span<{ $dither?: boolean; $tail?: boolean }>`
  width: 26px;
  height: 26px;
  flex: none;
  margin-left: 3px;
  position: relative;
  ${(p) => (p.$dither ? "background: repeating-conic-gradient(#c4c4d2 0 25%, #6c6c86 0 50%) 0 0 / 4px 4px;" : "")}
  svg { display: block; overflow: visible; }
  ${(p) =>
    p.$tail
      ? `&::after { content: ""; position: absolute; left: 7px; top: 100%; width: 3px; height: 3px; background: #e6e6ee; }`
      : ""}
`;

const Label = styled.span<{ $box?: boolean }>`
  margin-left: 1px;
  padding: 0 3px;
  height: 22px;
  line-height: 21px;
  border-radius: 3px;
  white-space: nowrap;
  ${(p) => (p.$box ? "background: #3a3b6f;" : "")}
`;

const Spot = styled.div`
  position: absolute;
  left: 8px;
  top: 155px;
  width: 60px;
  height: 60px;
  border-radius: 50%;
  background: rgba(196, 56, 84, 0.5);
  z-index: 3;
`;

const Pointer = styled.svg`
  position: absolute;
  left: 37px;
  top: 186px;
  z-index: 4;
`;

const Stage = styled.svg`
  position: absolute;
  left: 0;
  top: 0;
  pointer-events: none;
  font-family: "Noto Sans", sans-serif;
`;

const Float = styled.div<{ $x: number; $y: number; $w: number }>`
  position: absolute;
  left: ${(p) => p.$x}px;
  top: ${(p) => p.$y - 100}px;
  width: ${(p) => p.$w}px;
  height: 82px;
  border-radius: 4px;
  overflow: hidden;
  box-shadow: 0 6px 18px rgba(20, 20, 50, 0.28);
  z-index: 2;
`;

const FloatHead = styled.div<{ $tint?: boolean }>`
  height: 38px;
  display: flex;
  align-items: flex-start;
  padding: 8px 1px 0 10px;
  font-family: "Noto Sans CJK SC", sans-serif;
  font-size: 15px;
  line-height: 18px;
  color: #111;
  background: ${(p) => (p.$tint ? "linear-gradient(90deg,#f6f1e2,#eef2e2)" : "#f5f0e6")};
  white-space: nowrap;
`;

const CloseBtn = styled.div`
  width: 25px;
  height: 25px;
  margin-left: auto;
  flex: none;
  background: #c9574f;
  color: #fff;
  display: flex;
  align-items: center;
  justify-content: center;
`;

const FloatBody = styled.div`
  height: 44px;
  display: flex;
  gap: 7px;
  padding: 9px 0 0 10px;
  background: linear-gradient(180deg, #f2f2fa 0, #d8d9ec 25%, #cfd0e4 65%, #a4a5b4 92%, #8a8a96 100%);
  svg { display: block; flex: none; }
`;

const RightBar = styled.div`
  width: 48px;
  flex: none;
  display: flex;
  flex-direction: column;
  padding-left: 12px;
  background: linear-gradient(90deg, #fff 0, #e0e0f0 12%, #cfd0e4 30%, #cfd0e4 85%, #9a9aa8 100%);
`;

const BottomWrap = styled.div`
  position: relative;
`;

const CheckBox = styled.span<{ $gap: number }>`
  width: 15px;
  height: 15px;
  flex: none;
  margin: 6px 0 0 ${(p) => p.$gap}px;
  background: #fbfbe8;
  border: 1px solid #555;
`;

const CheckLabel = styled.span`
  margin: 4px 0 0 4px;
  font-family: "Noto Sans CJK SC", sans-serif;
  font-size: 15px;
  line-height: 20px;
  color: #222;
  white-space: nowrap;
`;

const Brand = styled.div`
  position: absolute;
  right: 8px;
  top: 1px;
  width: 52px;
  height: 38px;
`;

const BrandName = styled.span`
  position: absolute;
  right: 0;
  bottom: 0;
  font: italic bold 12px "Liberation Sans", sans-serif;
  letter-spacing: 0.5px;
  color: #2d3a7e;
`;

const StatusBar = styled.div`
  height: 32px;
  flex: none;
  display: flex;
  align-items: center;
  background: #cfd1e6;
  border-bottom: 1px solid #b8b8c4;
  padding-left: 4px;
  font-family: "Noto Sans CJK SC", sans-serif;
  font-size: 15px;
  color: #222;
  position: relative;
`;

const ImeBox = styled.div`
  margin-left: auto;
  width: 460px;
  height: 24px;
  margin-top: -2px;
  background: #fff;
  border-bottom: 1px solid #777;
  border-right: 1px solid #777;
  display: flex;
  align-items: center;
  position: relative;
`;

const SogouBadge = styled.div`
  position: absolute;
  left: 204px;
  top: -7px;
  width: 32px;
  height: 32px;
  background: #f4601c;
  border-radius: 4px;
  transform: rotate(-12deg);
  color: #fff;
  font: bold 30px/31px "Liberation Sans", sans-serif;
  text-align: center;
`;

const ImeIcons = styled.div`
  margin-left: 243px;
  display: flex;
  align-items: center;
  svg { display: block; flex: none; }
`;

const ImeItem = styled.span<{ $gap: number }>`
  width: 22px;
  height: 22px;
  flex: none;
  margin-left: ${(p) => p.$gap}px;
  color: #1d7fc4;
  font: bold 19px/22px "Noto Sans CJK SC", sans-serif;
  text-align: center;
`;

const Taskbar = styled.div`
  height: 59px;
  flex: none;
  display: flex;
  align-items: center;
  padding-left: 739px;
  position: relative;
  background: linear-gradient(90deg, #f4f4f4 0, #f3f3f4 40%, #eef1f3 45%, #d8ebf8 49%, #d3e8f8 70%, #cae8ee 85%, #bfe7de 86%, #cfe6ea 95%, #d6e5f0 100%);
`;

const TaskSlot = styled.div<{ $active?: boolean }>`
  width: 55.4px;
  height: 48px;
  flex: none;
  position: relative;
  display: flex;
  align-items: center;
  justify-content: center;
  margin-top: 1px;
  svg { display: block; }
  ${(p) =>
    p.$active
      ? `&::before { content: ""; position: absolute; left: 3px; right: 3px; top: 0; bottom: 0; background: rgba(255,255,255,.55); border-radius: 4px; }`
      : ""}
  > svg { position: relative; }
`;

const RunDot = styled.i<{ $on?: boolean }>`
  position: absolute;
  left: 50%;
  bottom: 1px;
  width: ${(p) => (p.$on ? 16 : 7)}px;
  margin-left: ${(p) => (p.$on ? -8 : -3.5)}px;
  height: 3px;
  border-radius: 2px;
  background: ${(p) => (p.$on ? "#a0662a" : "#6a7a8a")};
`;

const Tray = styled.div`
  margin-left: 337.8px;
  display: flex;
  align-items: center;
  svg { display: block; }
`;

const TraySlot = styled.div<{ $gap: number }>`
  width: 24px;
  height: 24px;
  flex: none;
  margin-left: ${(p) => p.$gap}px;
`;

const TrayZh = styled.span`
  font: 300 20px/24px "Noto Sans CJK SC", sans-serif;
  color: #778;
  display: block;
  text-align: center;
`;

const Clock = styled.div`
  width: 86px;
  text-align: right;
  font-size: 14px;
  line-height: 21px;
  color: #222;
`;

type Item = [string, number, (1 | 2)?];

function Ico({ n, s = 28 }: { n: string; s?: number }) {
  return (
    <svg width={s} height={s} viewBox="0 0 28 28">
      {ICONS[n]}
    </svg>
  );
}

function Strip({ items, start, col }: { items: Item[]; start: number; col?: boolean }) {
  let end = start;
  return (
    <>
      {items.map(([n, c, a], i) => {
        if (n === "|" || n === "!") {
          const size = col ? 3 : n === "!" ? 2 : 3;
          const gap = c - size / 2 - end;
          end = c + size / 2;
          return <Grip key={i} $gap={gap} $col={col} $tall={n === "!"} />;
        }
        const gap = c - 14 - end;
        end = c + 14;
        return (
          <ToolSlot key={i} $gap={gap} $col={col}>
            <Ico n={n} />
            {a ? <DropArrow $boxed={a === 2} /> : null}
          </ToolSlot>
        );
      })}
    </>
  );
}

function CatiaLogo({ s, frame }: { s: number; frame?: boolean }) {
  return (
    <svg width={s} height={s} viewBox="0 0 22 22">
      <defs>
        <radialGradient id="catiaGlow" cx=".72" cy=".25" r=".5">
          <stop offset="0" stopColor="#ffc98a" />
          <stop offset=".6" stopColor="#d9702a" />
          <stop offset="1" stopColor="#1a1420" stopOpacity="0" />
        </radialGradient>
      </defs>
      <rect width="22" height="22" fill={frame ? "#8a8a90" : "#333"} />
      <rect x="2" y="2" width="18" height="18" fill="#0a0a12" />
      <rect x="2" y="2" width="18" height="18" fill="url(#catiaGlow)" />
      <path d="M2 7c5 1 8 5 11 13H8C6 14 5 10 2 9z" fill="#2f8fe0" />
      <path d="M2 5c5 1 9 5 12 12" stroke="#9fdcff" fill="none" />
    </svg>
  );
}

const TOP: Item[] = [
  ["brush", 633], ["bulb", 669], ["point", 729, 1], ["line", 762.5, 1], ["plane", 798, 1], ["!", 821],
  ["wire", 845, 1], ["surf1", 879], ["surf2", 912, 1], ["!", 937], ["circle", 959, 1], ["helix", 992, 1], ["|", 1028],
  ["transform", 1055, 1], ["!", 1077], ["mirror", 1099.5], ["dots", 1135, 1], ["!", 1157], ["focus", 1180, 1], ["|", 1213],
  ["asm0", 1240], ["!", 1262], ["asmR", 1285, 1], ["asmB", 1320.5], ["!", 1342], ["spheres", 1365], ["|", 1399],
  ["cylY", 1427, 1], ["sparkle", 1462], ["coneK", 1497], ["|", 1531], ["dome", 1558, 1], ["wedge", 1593], ["boxY", 1628, 1],
  ["chamfer", 1662], ["split", 1698], ["target", 1732], ["rainbow", 1767], ["boxX", 1802, 1], ["boxShield", 1837],
];

const BOTTOM: Item[] = [
  ["|", 11], ["extrudeB", 36.6], ["surfRed", 73], ["surfMesh", 107], ["radar", 142], ["layers", 178], ["formula", 212.5], ["dotsGear", 248], ["|", 281],
  ["fx", 307], ["bubble", 342], ["chain", 374], ["table", 405, 1], ["tree2", 441], ["lock", 476, 1], ["params", 511], ["|", 544],
  ["plane3", 570], ["fit", 605], ["pan", 640], ["rotate", 675], ["zoomIn", 710], ["zoomOut", 745], ["normal", 781], ["views", 815], ["cube", 850, 1], ["canY", 886, 2],
  ["shade1", 920.5], ["shade2", 955], ["|", 988.5], ["camera", 1015], ["|", 1048.6], ["print", 1075], ["|", 1109], ["measure", 1135], ["caliper", 1170], ["weight", 1205], ["|", 1239], ["pencil", 1265],
];

const BOTTOM2: Item[] = [["ushape", 1390], ["|", 1443], ["cubeArrow", 1469], ["blocks", 1504.5], ["quad", 1539], ["arc", 1574]];

const RIGHT: Item[] = [
  ["|", 110], ["gear", 133], ["|", 170], ["cursor", 198, 1], ["|", 227], ["sketchC", 255, 1], ["|", 287],
  ["pad1", 313], ["pad2", 349], ["shaft", 384], ["cylH", 419], ["holeB", 454], ["rib", 489], ["slot", 524], ["stiff", 560, 1], ["loft", 594], ["rloft", 629], ["|", 659],
  ["capsule", 688, 1], ["|", 786], ["gridT", 812], ["gears", 848], ["geoT", 882, 1], ["treeGear", 916],
];

type Node = {
  icon: string; label: string; lvl: number; dither?: boolean; exp?: "+" | "-"; last?: boolean; tail?: boolean; box?: boolean;
};

const sk = (label: string): Node => ({ icon: "sketchT", label, lvl: 2, dither: true, exp: "+", box: true });
const NODES: Node[] = [
  { icon: "planeT", label: "xy 平面", lvl: 1, dither: true },
  { icon: "planeT", label: "yz 平面", lvl: 1, dither: true },
  { icon: "planeT", label: "zx 平面", lvl: 1, dither: true },
  { icon: "body", label: "零件几何体", lvl: 1, exp: "+" },
  { icon: "geoset", label: "几何图形集.1", lvl: 1, exp: "-", last: true, tail: true },
  sk("草图.1"), sk("草图.4"), sk("草图.5"), sk("草图.6"), sk("草图.7"),
  { icon: "extrudeT", label: "拉伸.1", lvl: 2, dither: true, exp: "+", box: true },
  { icon: "extrapT", label: "外插延伸.1", lvl: 2, dither: true, exp: "+", box: true },
  sk("草图.8"), sk("草图.9"),
  { icon: "projT", label: "项目.2", lvl: 2, dither: true, exp: "+", box: true },
  { icon: "projT", label: "项目.3", lvl: 2, dither: true, exp: "+", box: true },
  { icon: "symT", label: "对称.1", lvl: 2, dither: true, box: true },
  { icon: "symT", label: "对称.2", lvl: 2, dither: true, box: true },
  sk("草图.10"),
  { icon: "planeT", label: "平面.1", lvl: 2, dither: true, exp: "+", box: true },
  { icon: "multiT", label: "多重输出.6 (相交)", lvl: 2, dither: true, exp: "-", box: true, tail: true },
  { icon: "interT", label: "相交.1", lvl: 3, box: true },
  { icon: "interT", label: "相交.2", lvl: 3, box: true },
  { icon: "interT", label: "相交.3", lvl: 3, box: true },
  { icon: "interT", label: "相交.4", lvl: 3, box: true, last: true },
  sk("草图.12"),
];

function Exp({ t }: { t: "+" | "-" }) {
  return (
    <Expander>
      <svg width="11" height="11" viewBox="0 0 11 11">
        <path d={t === "+" ? "M0 5.5h11M5.5 0v11" : "M0 5.5h11"} stroke="#000" strokeWidth="3" />
      </svg>
    </Expander>
  );
}

function TreeRow({ n }: { n: Node }) {
  return (
    <Row>
      {n.lvl === 1 ? (
        <Guide $v={n.last ? "up" : "full"} $h>{n.exp ? <Exp t={n.exp} /> : null}</Guide>
      ) : (
        <Guide $v="none" />
      )}
      {n.lvl >= 2 ? (
        <Guide $v="full" $h={n.lvl === 2}>{n.lvl === 2 && n.exp ? <Exp t={n.exp} /> : null}</Guide>
      ) : null}
      {n.lvl === 3 ? <Guide $v={n.last ? "up" : "full"} $h /> : null}
      <TreeIcon $dither={n.dither} $tail={n.tail}>
        <Ico n={n.icon} s={26} />
      </TreeIcon>
      <Label $box={n.box}>{n.label}</Label>
    </Row>
  );
}

function Model() {
  const mid = "M770,292 C850,301 940,315 997,333 C1040,350 1070,385 1097,443 C1115,490 1130,540 1145,600 C1165,690 1180,780 1190,848";
  const low = "M775,362 C840,368 920,380 973,397 C1015,415 1050,445 1073,477 C1090,505 1105,550 1120,600 C1140,670 1165,770 1177,848";
  const up = "M795,243 C850,251 950,265 1013,288 C1055,305 1085,330 1105,362 C1125,395 1137,435 1148,472";
  const faceMain =
    "M795,243 C850,251 950,265 1013,288 C1055,305 1085,330 1105,362 C1125,395 1137,435 1148,472 L1172,530 C1190,610 1210,710 1224,812 L1190,848 C1180,780 1165,690 1145,600 C1130,540 1115,490 1097,443 C1070,385 1040,350 997,333 C940,315 850,301 770,292 C771,270 780,250 795,243 Z";
  return (
    <Stage width="1872" height="843" viewBox="0 100 1872 843">
      <defs>
        <linearGradient id="faceA" gradientUnits="userSpaceOnUse" x1="950" y1="290" x2="1225" y2="700">
          <stop offset="0" stopColor="#bfc1e6" />
          <stop offset=".45" stopColor="#a3a4c6" />
          <stop offset=".8" stopColor="#7d7e9c" />
          <stop offset="1" stopColor="#76779a" />
        </linearGradient>
        <linearGradient id="faceB" gradientUnits="userSpaceOnUse" x1="1000" y1="450" x2="1100" y2="820">
          <stop offset="0" stopColor="#9798b9" />
          <stop offset="1" stopColor="#a7a8c5" />
        </linearGradient>
        <linearGradient id="stripFade" gradientUnits="userSpaceOnUse" x1="1150" y1="610" x2="1180" y2="760">
          <stop offset="0" stopColor="#a9aac6" stopOpacity="0" />
          <stop offset="1" stopColor="#a9aac6" stopOpacity="1" />
        </linearGradient>
        <linearGradient id="cylT" gradientUnits="userSpaceOnUse" x1="760" y1="222" x2="745" y2="372">
          <stop offset="0" stopColor="#aeb0da" />
          <stop offset=".3" stopColor="#ffffff" />
          <stop offset=".47" stopColor="#c4c5dc" />
          <stop offset="1" stopColor="#8a8ba8" />
        </linearGradient>
        <linearGradient id="cylB" gradientUnits="userSpaceOnUse" x1="1195" y1="815" x2="1185" y2="895">
          <stop offset="0" stopColor="#a9aac8" />
          <stop offset=".4" stopColor="#ffffff" />
          <stop offset=".6" stopColor="#c4c5da" />
          <stop offset="1" stopColor="#9a9bb8" />
        </linearGradient>
        <filter id="soft" x="-30%" y="-80%" width="160%" height="260%">
          <feGaussianBlur stdDeviation="6" />
        </filter>
        <clipPath id="clipMain"><path d={faceMain} /></clipPath>
      </defs>
      <path d="M815,243 C870,250 960,262 1013,281 C1060,298 1100,330 1120,370 C1145,425 1160,480 1172,530 C1190,610 1210,710 1224,812 L1190,848 L1177,848 C1172,830 1168,805 1162,780 C1150,740 1130,680 1112,610 C1095,560 1080,505 1063,477 C1040,445 1005,418 965,400 C920,385 850,376 797,368 Z" fill="#8d8eac" />
      <path d="M1013,281 C1060,298 1100,330 1120,370 C1145,425 1160,480 1172,530 L1148,472 C1137,435 1125,395 1105,362 C1085,330 1055,305 1013,288 Z" fill="url(#faceA)" />
      <path d="M723,232 C730,226 738,222 746,222 L802,229 L815,240 L790,377 L777,375 L723,368 C700,340 700,260 723,232 Z" fill="url(#cylT)" />
      <ellipse cx="794" cy="305" rx="19" ry="74" transform="rotate(9 794 305)" fill="#8f90ae" stroke="#0c0c14" strokeWidth="2" />
      <path d={faceMain} fill="url(#faceA)" />
      <g clipPath="url(#clipMain)">
        <path d="M772,276 C850,283 930,296 1000,317 C1020,324 1040,338 1055,355" stroke="#ffffff" strokeWidth="13" fill="none" filter="url(#soft)" />
        <path d="M1150,610 C1170,700 1185,780 1195,850" stroke="url(#stripFade)" strokeWidth="16" fill="none" />
      </g>
      <path d={`${mid} L1177,848 C1165,770 1140,670 1120,600 C1105,550 1090,505 1073,477 C1050,445 1015,415 973,397 C920,380 840,368 775,362 C769,350 769,320 770,292 Z`} fill="url(#faceB)" />
      <path d="M746,222 C738,222 730,226 723,232 C700,260 700,340 723,368" fill="none" stroke="#0c0c14" strokeWidth="2.4" />
      <path d="M795,243 C780,250 771,270 770,292 C769,320 769,350 775,362" fill="none" stroke="#0c0c14" strokeWidth="2" />
      <path d={up} fill="none" stroke="#0c0c14" strokeWidth="2" />
      <path d={mid} fill="none" stroke="#0c0c14" strokeWidth="2.2" />
      <path d={low} fill="none" stroke="#0c0c14" strokeWidth="2.2" />
      <path d="M1165,808 C1152,825 1150,865 1163,887 L1222,897 L1225,813 L1190.7,848 L1177,848 C1172,835 1170,820 1165,808 Z" fill="url(#cylB)" />
      <path d="M1165,808 C1150,825 1150,865 1163,887" fill="none" stroke="#0c0c14" strokeWidth="2.4" />
      <path d="M1177,848 L1190.7,848 L1225,813" fill="none" stroke="#0c0c14" strokeWidth="2.4" />
      <ellipse cx="1232" cy="856" rx="16" ry="41" transform="rotate(7 1232 856)" fill="#75768f" stroke="#0c0c14" strokeWidth="2.4" />
      <g fill="#1b4165" stroke="#d8d0f8" strokeWidth="2.2" strokeLinejoin="round">
        <path d="M1722,217 L1700,240 C1712,252 1760,254 1782,233 L1780,225 L1738,218 Z" />
        <path d="M1737,138 C1765,148 1785,170 1791,197 L1738,190 Z" />
        <path d="M1737,140 C1722,160 1716,185 1715,212 L1738,190 Z" />
      </g>
      <path d="M1736.5,123 L1738,230" stroke="#d8d0f8" strokeWidth="2.4" />
      <circle cx="1736" cy="123" r="4.5" fill="#d8d0f8" />
      <rect x="1734" y="227" width="11" height="11" fill="#d81010" />
      <text x="1741" y="132" fontSize="16" fill="#e8d040">z</text>
      <text x="1795" y="208" fontSize="17" fill="#e8d040">y</text>
      <text x="1724" y="218" fontSize="14" fill="#e8d040">x</text>
      <path d="M1829,883 V908 L1855,912 M1829,908 L1822,915" stroke="#eeeef4" strokeWidth="1.4" fill="none" />
      <text x="1827" y="882" fontSize="15" fill="#eeeef4">z</text>
      <text x="1855" y="915" fontSize="16" fill="#eeeef4">y</text>
      <text x="1816" y="921" fontSize="15" fill="#eeeef4">x</text>
    </Stage>
  );
}

function FloatTool({ x, y, w, title, icons, tint }: { x: number; y: number; w: number; title: string; icons: string[]; tint?: boolean }) {
  return (
    <Float $x={x} $y={y} $w={w}>
      <FloatHead $tint={tint}>
        {title}
        <CloseBtn><X size={12} strokeWidth={3} /></CloseBtn>
      </FloatHead>
      <FloatBody>{icons.map((n) => <Ico key={n} n={n} />)}</FloatBody>
    </Float>
  );
}

export default function App() {
  return (
    <Root>
      <Global />
      <TitleBar>
        <CatiaLogo s={20} />
        <TitleText>CATIA V5 - [Part4]</TitleText>
        <WinButtons>
          <WinButton><Minus size={16} strokeWidth={1.2} /></WinButton>
          <WinButton>
            <svg width="16" height="16" viewBox="0 0 16 16" fill="none" stroke="#222" strokeWidth="1.2"><rect x="2" y="4" width="10" height="10" rx="2" /><path d="M5 2h7a2 2 0 0 1 2 2v7" /></svg>
          </WinButton>
          <WinButton><X size={17} strokeWidth={1.2} /></WinButton>
        </WinButtons>
      </TitleBar>
      <MenuBar>
        <CatiaLogo s={22} frame />
        <StartItem>开始</StartItem>
        {["文件", "编辑", "视图", "插入", "工具", "窗口", "帮助"].map((m) => <MenuItem key={m}>{m}</MenuItem>)}
        <DocButtons>
          <DocButton><Minus size={10} strokeWidth={2.5} /></DocButton>
          <DocButton>
            <svg width="12" height="12" viewBox="0 0 12 12" fill="none" stroke="#666" strokeWidth="1.2"><rect x="1" y="4" width="6" height="6" /><path d="M4 4V1h7v6H7" /></svg>
          </DocButton>
          <DocButton><X size={11} strokeWidth={3} /></DocButton>
        </DocButtons>
      </MenuBar>
      <Bar $h={47}>
        <Grip $gap={9} />
        <ComboRow>
          <ComboBox $w={91}><Swatch /><ChevronDown size={13} /></ComboBox>
          <ComboBox $w={91}>75%<ChevronDown size={13} /></ComboBox>
          <ComboBox $w={91}>自动<ChevronDown size={13} /></ComboBox>
          <ComboBox $w={92}>自动<ChevronDown size={13} /></ComboBox>
          <ComboBox $w={60}>自动<ChevronDown size={13} /></ComboBox>
          <ComboBox $w={61} $off><OffText>自动</OffText><ChevronDown size={13} /></ComboBox>
          <ComboBox $w={91}><NoneText>无</NoneText><ChevronDown size={13} /></ComboBox>
        </ComboRow>
        <Strip items={TOP} start={616} />
      </Bar>
      <Viewport>
        <Canvas>
          <ScrollBar>
            <ScrollBtn />
            <ScrollThumb />
            <ScrollTrack />
            <ScrollBtn $down />
          </ScrollBar>
          <Tree>
            <Row>
              <TreeIcon $tail><Ico n="root" s={26} /></TreeIcon>
              <Label>Part4</Label>
            </Row>
            {NODES.map((n, i) => <TreeRow key={i} n={n} />)}
          </Tree>
          <Model />
          <Spot />
          <Pointer width="14" height="20" viewBox="0 0 14 20"><path d="M1 1v15l4-3 3 6 3-1-3-6h5z" fill="#fff" stroke="#222" strokeWidth=".8" /></Pointer>
          <FloatTool x={1441} y={109} w={115} title="布尔操作" icons={["bool1", "bool2", "bool3"]} />
          <FloatTool x={1478} y={188} w={80} title="移除..." icons={["boxX", "removeSurf"]} />
          <FloatTool x={1520} y={344} w={80} title="草图..." icons={["sketchA", "sketchB"]} />
          <FloatTool x={1684} y={596} w={150} title="基于曲面的特征" icons={["padSurf", "thick", "capsule", "sew"]} tint />
        </Canvas>
        <RightBar><Strip items={RIGHT} start={100} col /></RightBar>
      </Viewport>
      <BottomWrap>
        <Bar $h={46}>
          <Strip items={BOTTOM} start={0} />
          <CheckBox $gap={8.5} />
          <CheckLabel>对齐视点</CheckLabel>
          <Strip items={BOTTOM2} start={1366.5} />
        </Bar>
        <Brand>
          <svg width="52" height="26" viewBox="0 0 52 26" fill="none">
            <path d="M10 24L16 6h8c8 0 6 14-8 18z" stroke="#3a3a9a" strokeWidth="2" />
            <path d="M22 2c6-3 12 0 6 5l-4 3" stroke="#c83030" strokeWidth="2" />
            <path d="M38 8c-6-2-10 2-6 5s2 8-6 7" stroke="#e8a020" strokeWidth="2" />
          </svg>
          <BrandName>CATIA</BrandName>
        </Brand>
      </BottomWrap>
      <StatusBar>
        选择对象或命令
        <ImeBox>
          <SogouBadge>S</SogouBadge>
          <ImeIcons>
            <ImeItem $gap={0}>中</ImeItem>
            <ImeItem $gap={5}>°,</ImeItem>
            <ImeItem $gap={4}>
              <svg width="22" height="22" viewBox="0 0 22 22" fill="none" stroke="#1d7fc4" strokeWidth="2"><circle cx="11" cy="11" r="9" /><path d="M8 7v3M14 7v3M6.5 13c2 4 7 4 9 0" /></svg>
            </ImeItem>
            <ImeItem $gap={5}>
              <svg width="22" height="22" viewBox="0 0 22 22" fill="#1d7fc4"><rect x="7" y="1" width="8" height="13" rx="4" /><path d="M4 10c0 9 14 9 14 0M11 17v4M7 21h8" fill="none" stroke="#1d7fc4" strokeWidth="2" /></svg>
            </ImeItem>
            <ImeItem $gap={5}>
              <svg width="22" height="22" viewBox="0 0 22 22"><rect x="1" y="3" width="20" height="16" rx="2" fill="#1d7fc4" /><path d="M4 8h14M4 11h14" stroke="#fff" strokeWidth="1.6" strokeDasharray="1.6 1" /><path d="M6 15h10" stroke="#fff" strokeWidth="2" /></svg>
            </ImeItem>
            <ImeItem $gap={8}>
              <svg width="22" height="22" viewBox="0 0 22 22" fill="#b4bcc4"><circle cx="8" cy="6" r="4" /><path d="M1 20c0-7 3-8 7-8s5 2 5 8z" /><rect x="13" y="13" width="8" height="7" fill="none" stroke="#b4bcc4" /></svg>
            </ImeItem>
            <ImeItem $gap={3}>
              <svg width="22" height="22" viewBox="0 0 22 22" fill="#1d7fc4"><path d="M7 2l4 2 4-2 6 4-3 4-2-1v11H6V9l-2 1-3-4z" /></svg>
            </ImeItem>
            <ImeItem $gap={5}>
              <svg width="22" height="22" viewBox="0 0 22 22" fill="#1d7fc4"><rect x="2" y="2" width="8" height="8" rx="2" /><rect x="12" y="2" width="8" height="8" rx="2" /><rect x="2" y="12" width="8" height="8" rx="2" /><rect x="12" y="12" width="8" height="8" rx="2" /></svg>
            </ImeItem>
          </ImeIcons>
        </ImeBox>
      </StatusBar>
      <Taskbar>
        <TaskSlot>
          <svg width="30" height="30" viewBox="0 0 30 30"><defs><linearGradient id="winG" x1="0" y1="0" x2="1" y2="1"><stop offset="0" stopColor="#35c8f5" /><stop offset="1" stopColor="#0a6fd0" /></linearGradient></defs><path d="M1 2h13v13H1zM16 2h13v13H16zM1 17h13v13H1zM16 17h13v13H16z" fill="url(#winG)" /></svg>
        </TaskSlot>
        <TaskSlot>
          <svg width="30" height="30" viewBox="0 0 30 30" fill="none" stroke="#333" strokeWidth="3"><circle cx="13" cy="13" r="10" /><path d="M20 20l8 8" strokeLinecap="round" /></svg>
        </TaskSlot>
        <TaskSlot>
          <svg width="32" height="30" viewBox="0 0 32 30"><path d="M1 3h12l3 4h15v21H1z" fill="#f5c518" /><path d="M1 3h12l3 4H1z" fill="#dba40e" /><rect x="9" y="20" width="14" height="8" rx="2" fill="#1673c6" /></svg>
        </TaskSlot>
        <TaskSlot>
          <svg width="30" height="26" viewBox="0 0 30 26"><path d="M1 3h7l4 13 3-10h2l3 10 3-13h7l-9 23h-4l-3-8-3 8h-4z" fill="#e03020" /></svg>
        </TaskSlot>
        <TaskSlot>
          <svg width="30" height="34" viewBox="0 0 30 34" fill="none" stroke="#f08a1c" strokeWidth="5"><circle cx="18" cy="12" r="9" /><path d="M11 19L3 31" strokeLinecap="round" /></svg>
        </TaskSlot>
        <TaskSlot>
          <svg width="30" height="26" viewBox="0 0 30 26"><rect width="30" height="26" rx="2" fill="#2c2c2e" /><rect width="30" height="5" fill="#55565c" /><path d="M5 10l6 4-6 4" stroke="#c8d8e8" strokeWidth="2" fill="none" /><path d="M14 19h9" stroke="#d8d8d8" strokeWidth="2" /></svg>
          <RunDot />
        </TaskSlot>
        <TaskSlot $active>
          <CatiaLogo s={28} frame />
          <RunDot $on />
        </TaskSlot>
        <TaskSlot>
          <svg width="28" height="32" viewBox="0 0 28 32"><defs><linearGradient id="picG" x1="0" y1="0" x2="1" y2="1"><stop offset="0" stopColor="#2a80e0" /><stop offset="1" stopColor="#7050b0" /></linearGradient></defs><rect y="2" width="28" height="29" rx="5" fill="url(#picG)" /><path d="M0 26l13-14 15 15v1a3 3 0 0 1-3 3H5a5 5 0 0 1-5-5z" fill="#5cc8f8" /><circle cx="21" cy="7" r="3" fill="#fff" /></svg>
          <RunDot />
        </TaskSlot>
        <Tray>
          <TraySlot $gap={0}>
            <svg width="24" height="24" viewBox="0 0 24 24" fill="none" stroke="#111" strokeWidth="2"><path d="M6 15l6-6 6 6" /></svg>
          </TraySlot>
          <TraySlot $gap={16}>
            <svg width="24" height="24" viewBox="0 0 24 24"><path d="M4 2h16v12c0 5-5 7-8 9-3-2-8-4-8-9z" fill="#f2a21c" /><path d="M12 6c4 4 3 10 0 12-3-2-3-5-1-7z" fill="#fff" /></svg>
          </TraySlot>
          <TraySlot $gap={17}><TrayZh>中</TrayZh></TraySlot>
          <TraySlot $gap={23}>
            <svg width="24" height="24" viewBox="0 0 24 24"><rect x="3" y="2" width="18" height="20" rx="3" fill="#ee6a2c" transform="rotate(-10 12 12)" /><path d="M17 8c-3-2-9-1-9 2s8 1 8 4-6 4-9 2" stroke="#fff" strokeWidth="3" fill="none" /></svg>
          </TraySlot>
          <TraySlot $gap={23}>
            <svg width="24" height="24" viewBox="0 0 24 24" fill="none" stroke="#222" strokeWidth="1.4"><path d="M14 4H2v14h16v-6M6 22h8M10 18v4" /><rect x="15" y="1" width="5" height="9" rx="1" /></svg>
          </TraySlot>
          <TraySlot $gap={6}>
            <svg width="24" height="24" viewBox="0 0 24 24" fill="none" stroke="#333" strokeWidth="1.3"><path d="M3 9h4l6-5v16l-6-5H3z" /><path d="M16 9c1 2 1 4 0 6" /><path d="M19 6c2 4 2 8 0 12" stroke="#999" /></svg>
          </TraySlot>
          <TraySlot $gap={6}>
            <svg width="24" height="24" viewBox="0 0 24 24"><path d="M2 8h6l2-4 1 4h9a1 1 0 0 1 1 1v9a1 1 0 0 1-1 1H2z" fill="#222" /><path d="M21 11h2v5h-2z" fill="#222" /></svg>
          </TraySlot>
          <Clock>0:33<br />2025/9/12</Clock>
          <TraySlot $gap={8}>
            <svg width="24" height="24" viewBox="0 0 24 24"><path d="M12 3c5 0 6 4 6 9l2 5H4l2-5c0-5 1-9 6-9z" fill="#222" /><path d="M9 19h6l-3 3z" fill="#222" /><path d="M9 9h5l-5 5h5" stroke="#fff" strokeWidth="1.4" fill="none" /><path d="M17 2h4l-4 4h4" stroke="#222" fill="none" /></svg>
          </TraySlot>
        </Tray>
      </Taskbar>
    </Root>
  );
}
